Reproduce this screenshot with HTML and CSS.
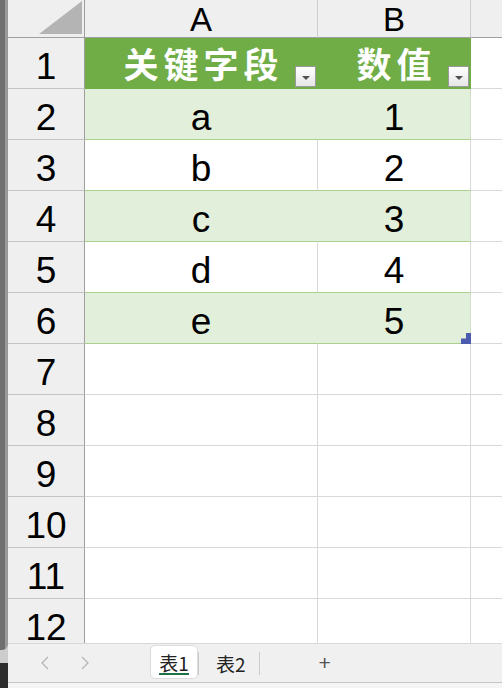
FILE: index.html
```html
<!DOCTYPE html>
<html lang="zh-CN">
<head>
  <meta charset="UTF-8">
  <meta name="viewport" content="width=device-width, initial-scale=1.0">
  <title>表1</title>
  <link rel="stylesheet" href="styles.css">
</head>
<body>

  <div class="edge">
    <div class="edge-bar"></div>
    <div class="edge-dark"></div>
  </div>

  <div class="app">
    <div class="sheet">
      <div class="corner">
        <svg width="77" height="38" viewBox="0 0 77 38"><polygon points="74,1 74,34 31,34" fill="#b4b4b4"/></svg>
      </div>
      <div class="col-head">A</div>
      <div class="col-head">B</div>
      <div class="col-head last"></div>

      <div class="row-head">1</div>
      <div class="cell th"><span class="th-text">关键字段</span><span class="filter"></span></div>
      <div class="cell th"><span class="th-text">数值</span><span class="filter"></span></div>
      <div class="cell last"></div>

      <div class="row-head">2</div>
      <div class="cell band">a</div>
      <div class="cell band edge-b">1</div>
      <div class="cell last"></div>

      <div class="row-head">3</div>
      <div class="cell plain">b</div>
      <div class="cell plain">2</div>
      <div class="cell last"></div>

      <div class="row-head">4</div>
      <div class="cell band">c</div>
      <div class="cell band edge-b">3</div>
      <div class="cell last"></div>

      <div class="row-head">5</div>
      <div class="cell plain">d</div>
      <div class="cell plain">4</div>
      <div class="cell last"></div>

      <div class="row-head">6</div>
      <div class="cell band">e</div>
      <div class="cell band edge-b">5<span class="handle"></span></div>
      <div class="cell last"></div>

      <div class="row-head">7</div><div class="cell"></div><div class="cell"></div><div class="cell last"></div>
      <div class="row-head">8</div><div class="cell"></div><div class="cell"></div><div class="cell last"></div>
      <div class="row-head">9</div><div class="cell"></div><div class="cell"></div><div class="cell last"></div>
      <div class="row-head">10</div><div class="cell"></div><div class="cell"></div><div class="cell last"></div>
      <div class="row-head">11</div><div class="cell"></div><div class="cell"></div><div class="cell last"></div>
      <div class="row-head">12</div><div class="cell"></div><div class="cell"></div><div class="cell last"></div>
    </div>

    <div class="tabs">
      <div class="nav">
        <svg width="8" height="14" viewBox="0 0 8 14"><polyline points="7,1 1,7 7,13" fill="none" stroke="#b3b3b3" stroke-width="1.2"/></svg>
        <svg width="8" height="14" viewBox="0 0 8 14"><polyline points="1,1 7,7 1,13" fill="none" stroke="#b3b3b3" stroke-width="1.2"/></svg>
      </div>
      <div class="tab active"><span>表1</span></div>
      <div class="sep"></div>
      <div class="tab">表2</div>
      <div class="sep"></div>
      <div class="add">+</div>
    </div>
    <div class="foot"></div>
  </div>

</body>
</html>
```

FILE: styles.css
```css
* { box-sizing: border-box; }

body {
  margin: 0;
  padding: 0;
  display: flex;
  height: 688px;
  overflow: hidden;
  background: #ffffff;
  font-family: 'Liberation Sans', 'Noto Sans CJK SC', sans-serif;
  color: #000;
}

/* left window edge */
.edge {
  width: 8px;
  display: flex;
  flex-direction: column;
  background: #cdcdcd;
}

.edge-bar {
  flex: 1;
  margin-bottom: 13px;
  background: linear-gradient(to right, #6f6f6f 0 5px, #999999 5px);
  border-bottom-right-radius: 6px;
}

.edge-dark {
  height: 25px;
  background: #2d2d2d;
}

.app {
  flex: 1;
  display: flex;
  flex-direction: column;
  min-width: 0;
}

/* grid */
.sheet {
  height: 643px;
  overflow: hidden;
  display: grid;
  grid-template-columns: 77px 233px 153px 1fr;
  grid-template-rows: 38px;
  grid-auto-rows: 51px;
  align-content: start;
}

.corner {
  background: #efefef;
  border-right: 1px solid #9f9f9f;
  border-bottom: 1px solid #9f9f9f;
}

.corner svg { display: block; }

.col-head {
  background: #efefef;
  border-right: 1px solid #cdcdcd;
  border-bottom: 1px solid #9f9f9f;
  display: flex;
  justify-content: center;
  align-items: center;
  padding-top: 2px;
  font-size: 33px;
  line-height: 1;
  overflow: hidden;
}

.col-head.last { border-right: none; }

.row-head {
  background: #efefef;
  border-right: 1px solid #9f9f9f;
  border-bottom: 1px solid #c4c4c4;
  display: flex;
  justify-content: center;
  align-items: center;
  padding-top: 7px;
  font-size: 37px;
  line-height: 30px;
}

.cell {
  position: relative;
  border-right: 1px solid #d9d9d9;
  border-bottom: 1px solid #d9d9d9;
  display: flex;
  justify-content: center;
  align-items: center;
  padding-top: 7px;
  font-size: 37px;
  line-height: 30px;
}

.cell.last { border-right: none; }

/* table styling */
.th {
  background: #70ad47;
  border-right-color: #70ad47;
  border-bottom-color: #70ad47;
  padding-top: 0;
}

.th-text {
  color: #fff;
  font-family: 'Noto Sans CJK SC', sans-serif;
  font-weight: bold;
  font-size: 35px;
  letter-spacing: 5px;
  margin-right: -5px;
}

.band {
  background: #e2efda;
  border-right-color: #e2efda;
  border-bottom-color: #a9d08e;
}

.band.edge-b { border-right-color: #cfdfc4; }

.plain { border-bottom-color: #a9d08e; }

.filter {
  position: absolute;
  right: 1px;
  bottom: 1px;
  width: 21px;
  height: 21px;
  border: 1px solid #9a9a9a;
  background: linear-gradient(#ffffff, #e6e6e6);
  display: flex;
  justify-content: center;
  align-items: center;
}

.filter::after {
  content: "";
  border-left: 4px solid transparent;
  border-right: 4px solid transparent;
  border-top: 4px solid #505050;
  margin-top: 2px;
}

.handle {
  position: absolute;
  right: -1px;
  bottom: -1px;
  width: 10px;
  height: 11px;
  background: #4a5bb0;
  clip-path: polygon(50% 0, 100% 0, 100% 100%, 0 100%, 0 50%, 50% 50%);
}

/* sheet tabs */
.tabs {
  height: 40px;
  background: #f0f0f0;
  border-top: 1px solid #d8d8d8;
  border-bottom: 1px solid #c6c6c6;
  display: flex;
  align-items: center;
}

.nav {
  width: 142px;
  display: flex;
  align-items: center;
  gap: 32px;
  padding-left: 33px;
}

.nav svg { display: block; }

.tab {
  font-family: 'Noto Sans CJK SC', sans-serif;
  font-size: 19px;
  color: #222;
  padding: 0 13px;
}

.tab.active {
  align-self: stretch;
  margin: 1px 0 3px;
  width: 48px;
  padding: 0;
  background: #ffffff;
  border: 1px solid #dcdcdc;
  border-radius: 5px;
  display: flex;
  justify-content: center;
  align-items: center;
}

.tab.active span {
  border-bottom: 2px solid #1e7145;
  line-height: 20px;
  padding-top: 2px;
  margin-top: 2px;
}

.sep {
  width: 1px;
  height: 23px;
  background: #cccccc;
  margin: 0 4px;
}

.tab + .sep { margin-left: 0; }

.add {
  margin-left: 55px;
  font-size: 21px;
  color: #555;
  font-weight: 300;
}

.foot {
  height: 5px;
  background: #f5f5f5;
}
```
